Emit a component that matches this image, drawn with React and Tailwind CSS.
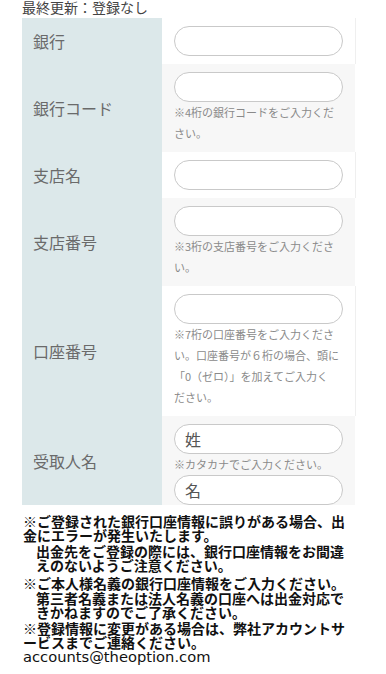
import { useState } from 'react';

const fields = [
  { key: 'bank', label: '銀行', hint: [] },
  { key: 'bankCode', label: '銀行コード', hint: ['※4桁の銀行コードをご入力くだ', 'さい。'] },
  { key: 'branch', label: '支店名', hint: [] },
  { key: 'branchCode', label: '支店番号', hint: ['※3桁の支店番号をご入力くださ', 'い。'] },
  {
    key: 'account',
    label: '口座番号',
    hint: [
      '※7桁の口座番号をご入力くださ',
      'い。口座番号が６桁の場合、頭に',
      '「0（ゼロ）」を加えてご入力く',
      'ださい。'
    ]
  }
];

function TextInput({ value, onChange, placeholder }) {
  return (
    <input
      type="text"
      value={value}
      placeholder={placeholder}
      onChange={(e) => onChange(e.target.value)}
      className="block w-[169px] h-[30px] rounded-full border border-[#c9c9c9] bg-white px-[10px] text-[16px] text-[#555] placeholder:text-[#555] outline-none"
    />
  );
}

function Hint({ lines }) {
  return (
    <div className="text-[11px] leading-[21px] text-[#8a8a8a]">
      {lines.map((line) => (
        <div key={line} className="whitespace-nowrap">{line}</div>
      ))}
    </div>
  );
}

export default function App() {
  const [form, setForm] = useState({
    bank: '',
    bankCode: '',
    branch: '',
    branchCode: '',
    account: '',
    lastName: '',
    firstName: ''
  });

  const update = (key) => (value) => setForm({ ...form, [key]: value });

  return (
    <div className="w-[386px] min-h-[674px] bg-white font-['Noto_Sans_CJK_JP',sans-serif]">
      <div className="pl-[22px] text-[14px] leading-[15px] text-[#444] mb-[3px]">最終更新：登録なし</div>

      <div className="ml-[22px] w-[332px]">
        {fields.map((f, i) => (
          <div key={f.key} className="flex">
            <div className="w-[140px] shrink-0 bg-[#dce8ea] pl-[11px] flex items-center text-[16px] text-[#6a6a6a]">
              {f.label}
            </div>
            <div
              className={
                i % 2 === 1
                  ? 'flex-1 bg-[#f7f7f7] px-[12px] pt-[8px] pb-[8px]'
                  : 'flex-1 bg-white border-r border-[#efefef] px-[12px] pt-[8px] pb-[8px]'
              }
            >
              <TextInput value={form[f.key]} onChange={update(f.key)} />
              {f.hint.length > 0 && <Hint lines={f.hint} />}
            </div>
          </div>
        ))}

        {/* recipient name */}
        <div className="flex">
          <div className="w-[140px] shrink-0 bg-[#dce8ea] pl-[11px] flex items-center text-[16px] text-[#6a6a6a]">
            受取人名
          </div>
          <div className="flex-1 bg-[#f7f7f7] px-[12px] pt-[8px]">
            <TextInput value={form.lastName} onChange={update('lastName')} placeholder="姓" />
            <Hint lines={['※カタカナでご入力ください。']} />
            <TextInput value={form.firstName} onChange={update('firstName')} placeholder="名" />
          </div>
        </div>
      </div>

      <div className="pl-[23px] pt-[9px] text-[14px] leading-[14px] font-semibold text-[#111] whitespace-nowrap">
        <p>
          ※ご登録された銀行口座情報に誤りがある場合、出<br />
          金にエラーが発生いたします。
        </p>
        <p className="mt-[2px] pl-[13px]">
          出金先をご登録の際には、銀行口座情報をお間違<br />
          えのないようご注意ください。
        </p>
        <p className="mt-[4px]">※ご本人様名義の銀行口座情報をご入力ください。</p>
        <p className="mt-[1px] pl-[13px]">
          第三者名義または法人名義の口座へは出金対応で<br />
          きかねますのでご了承ください。
        </p>
        <p className="mt-[2px]">
          ※登録情報に変更がある場合は、弊社アカウントサ<br />
          ービスまでご連絡ください。<br />
          <span className="font-['DejaVu_Sans',sans-serif] font-normal text-[14.7px]">accounts@theoption.com</span>
        </p>
      </div>
    </div>
  );
}
